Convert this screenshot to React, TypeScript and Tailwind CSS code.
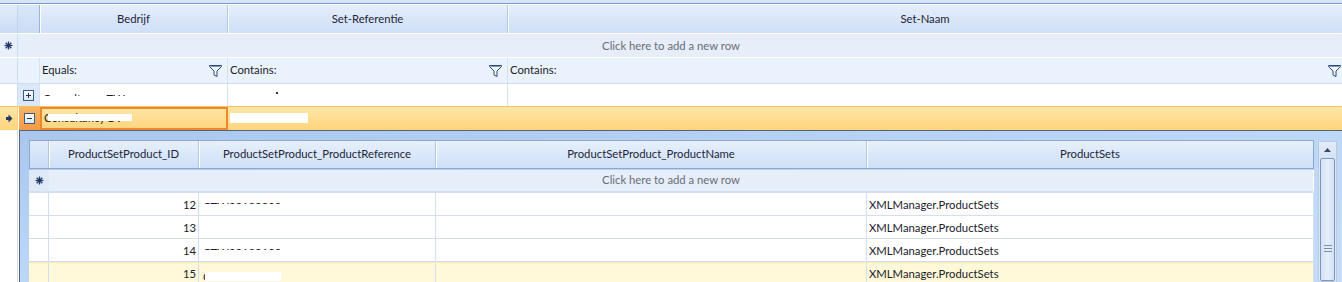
import React from 'react';

const FilterIcon = () => (
  <svg width="13" height="12" viewBox="0 0 13 12" className="shrink-0">
    <path d="M0.5 0.5 H12.5 V1.5 L8 6 V11.5 L5 10 V6 L0.5 1.5 Z" fill="#f4f8fd" stroke="#2b4a78" />
    <path d="M1.5 1.5 H11.5" stroke="#7d95bb" />
  </svg>
);

const Star = () => (
  <svg width="9" height="9" viewBox="0 0 9 9">
    <g stroke="#1f3a66" strokeWidth="1.3">
      <path d="M4.5 0.5 V8.5" />
      <path d="M0.5 4.5 H8.5" />
      <path d="M1.7 1.7 L7.3 7.3" />
      <path d="M7.3 1.7 L1.7 7.3" />
    </g>
  </svg>
);

const Arrow = () => (
  <svg width="8" height="9" viewBox="0 0 8 9">
    <path d="M1 3 H3.5 V0.5 L7.5 4.5 L3.5 8.5 V6 H1 Z" fill="#1f3a66" />
  </svg>
);

const ExpandBox = ({ open }: { open?: boolean }) => (
  <div className="relative w-[11px] h-[11px] border border-[#3d5a88] bg-linear-to-b from-[#ffffff] to-[#dbe5f2]">
    <div className="absolute left-[2px] top-[4px] w-[5px] h-px bg-[#1c3050]" />
    {!open && <div className="absolute left-[4px] top-[2px] w-px h-[5px] bg-[#1c3050]" />}
  </div>
);

// text of which only the top few pixels are shown
const Clipped = ({ text, h = 4 }: { text: string; h?: number }) => (
  <span
    className="inline-block overflow-hidden leading-[14px] align-top"
    style={{ height: h }}
  >
    {text}
  </span>
);

const Head = ({ w, label, last }: { w?: string; label: string; last?: boolean }) => (
  <div
    className={`${w ?? 'flex-1'} h-full flex items-center justify-center ${
      last ? '' : 'border-r border-[#b3c6e0]'
    } shadow-[inset_1px_0_0_#ffffff]`}
  >
    {label}
  </div>
);

const rows = [
  { id: 12, ref: 'CTW20120099', clip: true },
  { id: 13, ref: '', clip: false },
  { id: 14, ref: 'CTW20120100', clip: true },
  { id: 15, ref: 'CTW20120101', clip: true, hl: true },
];

export default function App() {
  return (
    <div className="w-[1342px] h-[282px] overflow-hidden bg-white text-[11.3px] text-[#1b1b2b] font-['Lato','Noto_Sans',sans-serif]">
      {/* top strip */}
      <div className="h-[3px] bg-[#d6e4f6]" />
      <div className="h-px bg-[#7b9bca]" />

      {/* master header */}
      <div className="flex h-[30px] border-t border-white border-b border-[#a4b8d4] bg-linear-to-b from-[#e5eefb] to-[#cedff7] text-[#1f1f3a]">
        <div className="w-[18px] h-full border-r border-[#c2d3ea] bg-linear-to-b from-[#e2edfb] to-[#c9dcf5]" />
        <div className="w-[22px] h-full border-r border-[#9fb3cf] bg-linear-to-b from-[#d9e7fa] to-[#cadcf5]" />
        <Head w="w-[188px]" label="Bedrijf" />
        <Head w="w-[280px]" label="Set-Referentie" />
        <Head label="Set-Naam" last />
      </div>

      {/* add new row */}
      <div className="relative flex h-[24px] bg-[#e6eef9] border-b border-white">
        <div className="absolute left-0 top-0 w-[18px] h-full border-r border-[#d0dcee] bg-[#e9f0fa] flex items-center justify-center">
          <Star />
        </div>
        <div className="flex-1 flex items-center justify-center pt-px text-[#6b6b78]">
          Click here to add a new row
        </div>
      </div>

      {/* filter row */}
      <div className="flex h-[26px] bg-[#eaf3fd] border-b border-[#d0dcef]">
        <div className="w-[18px] h-full border-r border-[#d0dcee]" />
        <div className="w-[22px] h-full border-r border-[#d6e2f2]" />
        <div className="w-[188px] h-full flex items-center justify-between pl-[2px] pr-[5px] border-r border-[#d6e2f2]">
          <span>Equals:</span>
          <FilterIcon />
        </div>
        <div className="w-[280px] h-full flex items-center justify-between pl-[2px] pr-[5px] border-r border-[#d6e2f2]">
          <span>Contains:</span>
          <FilterIcon />
        </div>
        <div className="flex-1 h-full flex items-center justify-between pl-[2px] pr-[1px]">
          <span>Contains:</span>
          <FilterIcon />
        </div>
      </div>

      {/* data row */}
      <div className="flex h-[22px] bg-white">
        <div className="w-[18px] h-full border-r border-[#d0dcee]" />
        <div className="w-[22px] h-full border-r border-[#d6e2f2] bg-[#dbe8f8] flex items-center justify-center">
          <ExpandBox />
        </div>
        <div className="w-[188px] h-full border-r border-[#d6e2f2] pl-[3px] pt-[8px]">
          <Clipped text="Consultancy TW" />
        </div>
        <div className="w-[280px] h-full border-r border-[#d6e2f2] pl-[48px] pt-[8px]">
          <span className="block w-[2px] h-[2px] bg-[#333]" />
        </div>
        <div className="flex-1" />
      </div>

      {/* selected row */}
      <div className="flex h-[24px] border-t border-[#f3c160] bg-linear-to-b from-[#fde7a6] to-[#ffd47c]">
        <div className="w-[18px] h-full border-r border-[#f7d18a] flex items-center justify-center">
          <Arrow />
        </div>
        <div className="w-[22px] h-full border-l border-white bg-linear-to-b from-[#f8b460] to-[#f39a46] flex items-center justify-center">
          <ExpandBox open />
        </div>
        <div className="relative w-[188px] h-full border-2 border-[#f0862e] pl-[2px] flex items-center">
          <span className="text-[#222]">Consultancy BV</span>
          <div className="absolute left-[6px] top-[5px] w-[84px] h-[7px] bg-white" />
        </div>
        <div className="relative w-[280px] h-full flex items-center pl-[3px]">
          <span className="text-[#222]">Z2012-123</span>
          <div className="absolute left-[2px] top-[6px] w-[78px] h-[10px] bg-white" />
        </div>
        <div className="flex-1" />
      </div>

      {/* detail area */}
      <div className="flex h-[152px]">
        <div className="w-[18px] h-full border-r border-[#d6dde8] bg-white" />
        <div className="w-px bg-white" />
        <div className="flex-1 h-full border-t border-l border-[#56647a] bg-linear-to-br from-[#a9c7ee] via-[#bdd7f7] to-[#c4dcf8] pl-[9px] pt-[9px] flex gap-[4px]">
          {/* inner grid */}
          <div className="w-[1285px] flex flex-col">
            <div className="shrink-0 flex h-[29px] border border-[#8ea8cb] bg-linear-to-b from-[#e7f0fc] to-[#cee0f8] text-[#1f1f3a]">
              <div className="w-[19px] h-full border-r border-[#b3c6e0] bg-linear-to-b from-[#e1ecfb] to-[#cadcf5]" />
              <Head w="w-[150px]" label="ProductSetProduct_ID" />
              <Head w="w-[237px]" label="ProductSetProduct_ProductReference" />
              <Head w="w-[431px]" label="ProductSetProduct_ProductName" />
              <Head label="ProductSets" last />
            </div>
            <div className="relative shrink-0 flex h-[23px] mt-px bg-[#e6eef9] border-b-2 border-[#d4e0f1] border-r border-r-white">
              <div className="absolute left-0 top-0 w-[20px] h-full bg-[#dfe9f7] flex items-center justify-center">
                <Star />
              </div>
              <div className="flex-1 flex items-center justify-center text-[#6b6b78]">
                Click here to add a new row
              </div>
            </div>
            {rows.map((r) => (
              <div
                key={r.id}
                className={`shrink-0 flex h-[23px] border-b border-[#d3dff0] border-r border-r-[#d3dff0] ${
                  r.hl ? 'bg-[#fff9d9] border-t border-t-[#fde9ae]' : 'bg-white'
                }`}
              >
                <div className="w-[20px] h-full border-r border-[#d3dff0]" />
                <div className="w-[150px] h-full border-r border-[#d3dff0] flex items-center justify-end pr-[2px] pt-[2px]">
                  {r.id}
                </div>
                <div className="relative w-[237px] h-full border-r border-[#d3dff0] pl-[4px] pt-[7px]">
                  {r.clip && !r.hl && <Clipped text={r.ref} />}
                  {r.hl && (
                    <>
                      <span className="block leading-[14px]">{r.ref}</span>
                      <div className="absolute left-[6px] top-[9px] w-[76px] h-[9px] bg-white" />
                    </>
                  )}
                </div>
                <div className="w-[431px] h-full border-r border-[#d3dff0]" />
                <div className="flex-1 h-full flex items-center pl-[2px] pt-[2px]">XMLManager.ProductSets</div>
              </div>
            ))}
          </div>

          {/* scrollbar */}
          <div className="w-[19px] mt-px flex flex-col border border-[#b9cbe3] bg-[#dce8f6]">
            <div className="h-[16px] shrink-0 flex items-center justify-center bg-linear-to-b from-[#e4edf9] to-[#d3e2f5]">
              <svg width="7" height="4" viewBox="0 0 7 4">
                <path d="M0 4 L3.5 0 L7 4 Z" fill="#3b4a66" />
              </svg>
            </div>
            <div className="flex-1 mx-px border border-[#7f96b9] rounded-[2px] bg-linear-to-r from-[#d3e2f6] via-[#e4eefa] to-[#d3e2f6] flex flex-col items-center pt-[86px] gap-[2px]">
              <div className="w-[8px] h-px bg-[#7a8fb0]" />
              <div className="w-[8px] h-px bg-[#7a8fb0]" />
              <div className="w-[8px] h-px bg-[#7a8fb0]" />
            </div>
          </div>
        </div>
      </div>
    </div>
  );
}
